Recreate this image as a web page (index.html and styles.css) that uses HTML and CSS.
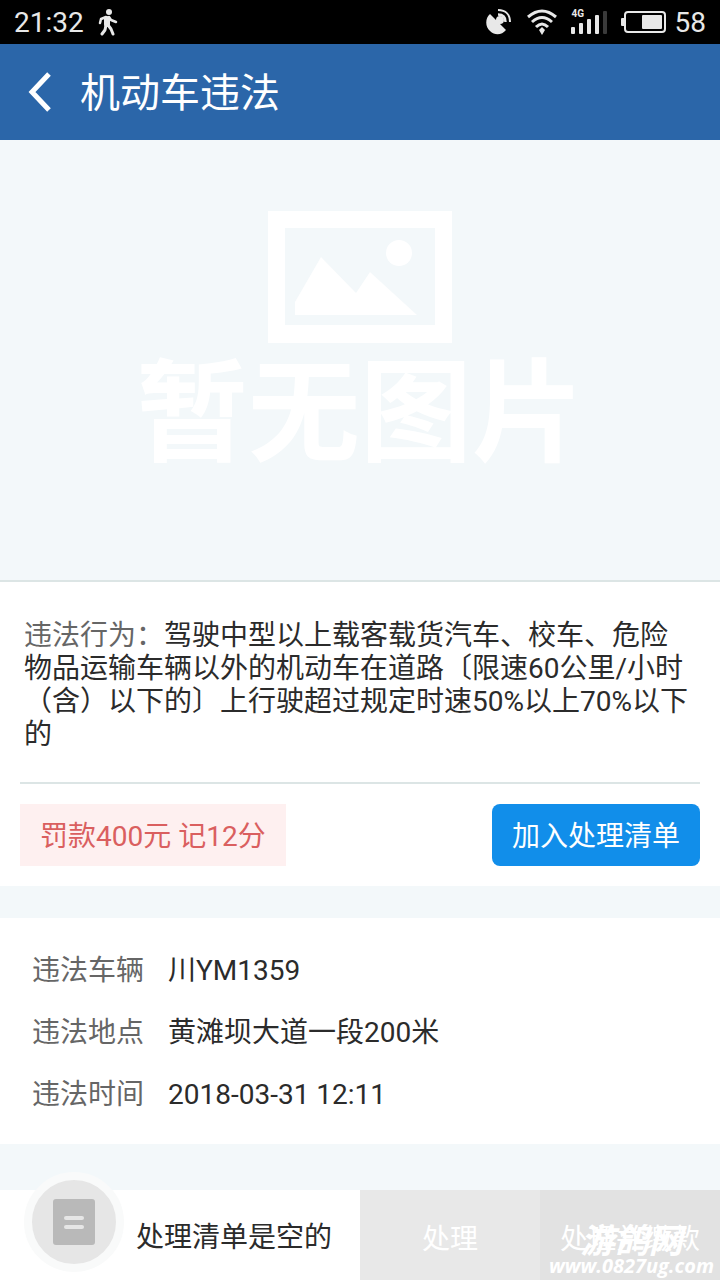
FILE: index.html
```html
<!DOCTYPE html>
<html lang="zh-CN">
<head>
    <meta charset="UTF-8">
    <meta name="viewport" content="width=device-width, initial-scale=1.0">
    <title>机动车违法</title>
    <link rel="stylesheet" href="styles.css">
</head>
<body>
    <div class="status-bar">
        <span>21:32</span>
        <svg class="walk" width="20" height="28" viewBox="0 0 20 28" fill="none" stroke="#e8e8e8" stroke-linecap="round" stroke-linejoin="round">
            <circle cx="11" cy="4" r="3" fill="#e8e8e8" stroke="none"/>
            <path d="M9 11L9 16" stroke-width="6"/>
            <path d="M8 9L3 11L2 15M11 9L13 12L18 14" stroke-width="2.5"/>
            <path d="M8 17L7 22L4 26M10 17L13 21L15 26" stroke-width="3"/>
        </svg>
        <div class="status-icons">
            <svg width="28" height="28" viewBox="0 0 28 28" fill="none" stroke="#e8e8e8">
                <path d="M5 6C0 10 0 19 5 23C10 28 17 27 21 22L15 16A4 4 0 1 0 11 12Z" fill="#e8e8e8" stroke="none"/>
                <path d="M13 6.5C18 6.5 20.500 9 20.500 14" stroke-width="2.500"/>
                <path d="M13 2C21 2 25 7 25 14" stroke-width="2"/>
            </svg>
            <svg width="30" height="28" viewBox="0 0 30 28" fill="none" stroke="#e8e8e8" stroke-width="3">
                <path d="M1 9Q15-3 29 9M5 14Q15 5 25 14M9 19Q15 13 21 19"/>
                <path d="M15 19L18 22L15 27L12 22Z" fill="#e8e8e8" stroke="none"/>
            </svg>
            <div class="signal">
                <span>4G</span>
                <svg width="36" height="28" viewBox="0 0 36 28" fill="#e8e8e8">
                    <rect x="0" y="19" width="4" height="7" rx="1"/>
                    <rect x="8" y="15" width="4" height="11" rx="1"/>
                    <rect x="16" y="11" width="4" height="15" rx="1"/>
                    <rect x="24" y="7" width="4" height="19" rx="1"/>
                    <rect x="32" y="3" width="4" height="23" rx="1" fill="#3a3a3a"/>
                </svg>
            </div>
            <svg width="46" height="28" viewBox="0 0 46 28">
                <rect x="4" y="4" width="40" height="20" rx="3" fill="none" stroke="#e8e8e8" stroke-width="2"/>
                <rect x="0" y="10" width="4" height="8" rx="1" fill="#e8e8e8"/>
                <rect x="21" y="7" width="20" height="14" rx="1" fill="#e8e8e8"/>
            </svg>
        </div>
        <span>58</span>
    </div>

    <header class="header">
        <button class="back-btn" aria-label="返回">
            <svg width="24" height="40" viewBox="0 0 24 40" fill="none" stroke="#fff" stroke-width="5">
                <path d="M21 2L4 20L21 38"/>
            </svg>
        </button>
        <h1>机动车违法</h1>
    </header>

    <main>
        <div class="no-image">
            <svg width="184" height="132" viewBox="0 0 184 132" fill="#fff">
                <path fill-rule="evenodd" d="M0 0H184V132H0ZM17 17V114H167V17Z"/>
                <path d="M27 104V91L53 46L88 82L102 61L149 104Z"/>
                <circle cx="131" cy="42" r="13"/>
            </svg>
            <p>暂无图片</p>
        </div>

        <section class="violation">
            <p class="desc"><span class="label">违法行为：</span>驾驶中型以上载客载货汽车、校车、危险物品运输车辆以外的机动车在道路〔限速60公里/小时（含）以下的〕上行驶超过规定时速50%以上70%以下的</p>
            <div class="penalty-row">
                <span class="penalty">罚款400元 记12分</span>
                <button class="add-btn">加入处理清单</button>
            </div>
        </section>

        <dl class="info">
            <dt>违法车辆</dt>
            <dd>川YM1359</dd>
            <dt>违法地点</dt>
            <dd>黄滩坝大道一段200米</dd>
            <dt>违法时间</dt>
            <dd>2018-03-31 12:11</dd>
        </dl>
    </main>

    <footer class="footer">
        <div class="list-state">
            <button class="list-btn" aria-label="处理清单">
                <svg width="42" height="46" viewBox="0 0 42 46">
                    <rect width="42" height="46" rx="3" fill="#b9b9b9"/>
                    <path d="M13 19H29M13 28H29" stroke="#e6e6e6" stroke-width="4" stroke-linecap="round"/>
                </svg>
            </button>
            <span>处理清单是空的</span>
        </div>
        <button class="action">处理</button>
        <button class="action pay">处理并缴款</button>
        <div class="watermark">
            <span class="site-name">游鸽网</span>
            <span class="site-url">www.0827ug.com</span>
        </div>
    </footer>
</body>
</html>
```
FILE: styles.css
```css
:root {
    --blue: #2b66a9;
    --page: #f3f8fa;
    --line: #dce5e5;
    --dark: #2b2b2b;
    --gray: #666;
}

* {
    margin: 0;
    padding: 0;
    box-sizing: border-box;
}

body {
    min-height: 100vh;
    display: flex;
    flex-direction: column;
    font-family: Roboto, 'Noto Sans CJK SC', sans-serif;
    font-size: 28px;
    color: var(--dark);
    background-color: var(--page);
}

button {
    border: none;
    font: inherit;
    cursor: pointer;
}

svg {
    display: block;
}

main {
    flex: 1;
}

.status-bar {
    height: 44px;
    padding: 0 14px;
    display: flex;
    align-items: center;
    gap: 8px;
    color: #e8e8e8;
    background-color: #000;
}

.walk {
    margin-left: 6px;
}

.status-icons {
    margin-left: auto;
    display: flex;
    align-items: center;
    gap: 14px;
}

.signal {
    position: relative;
}

.signal span {
    position: absolute;
    top: 0;
    left: 1px;
    font-size: 10px;
    font-weight: 700;
    line-height: 12px;
}

.header {
    height: 96px;
    padding: 0 28px;
    display: flex;
    align-items: center;
    gap: 28px;
    color: #fff;
    background-color: var(--blue);
}

.header h1 {
    padding-bottom: 4px;
    font-size: 40px;
    font-weight: 400;
}

.back-btn {
    background: none;
}

.no-image {
    height: 442px;
    padding-top: 71px;
    display: flex;
    flex-direction: column;
    align-items: center;
    color: #fff;
    border-bottom: 2px solid var(--line);
}

.no-image p {
    font-size: 112px;
    font-weight: 700;
    line-height: 144px;
}

.violation {
    padding: 0 20px 20px;
    background-color: #fff;
}

.desc {
    padding: 37px 8px 31px 4px;
    line-height: 33px;
    border-bottom: 2px solid var(--line);
}

.label,
.info dt {
    color: var(--gray);
}

.penalty-row {
    padding-top: 20px;
    display: flex;
    justify-content: space-between;
}

.penalty,
.add-btn {
    padding: 4px 20px 0;
    line-height: 58px;
}

.penalty {
    color: #da5f5f;
    background-color: #fef0f0;
}

.add-btn {
    color: #fff;
    background-color: #118eea;
    border-radius: 8px;
}

.info {
    margin: 32px 0;
    padding: 22px 32px 18px;
    display: grid;
    grid-template-columns: auto 1fr;
    column-gap: 24px;
    line-height: 62px;
    background-color: #fff;
}

.footer {
    position: sticky;
    bottom: 0;
    height: 90px;
    display: grid;
    grid-template-columns: 2fr 1fr 1fr;
    background-color: #fff;
}

.list-state {
    padding-left: 24px;
    display: flex;
    align-items: center;
    gap: 12px;
}

.list-btn {
    width: 100px;
    height: 100px;
    margin-top: -26px;
    display: flex;
    align-items: center;
    justify-content: center;
    background-color: #e6e6e6;
    border: 8px solid #f9fafa;
    border-radius: 50%;
}

.action {
    padding-top: 4px;
    color: #fff;
    background-color: #e8e8e8;
}

.pay {
    background-color: #e2e2e2;
}

.watermark {
    position: absolute;
    right: 6px;
    bottom: 2px;
    display: flex;
    flex-direction: column;
    align-items: center;
    color: #fff;
    font-weight: 700;
    font-style: italic;
    pointer-events: none;
}

.site-name {
    font-size: 34px;
    line-height: 26px;
}

.site-url {
    font-family: 'Open Sans', sans-serif;
    font-size: 20px;
    line-height: 24px;
}
```
